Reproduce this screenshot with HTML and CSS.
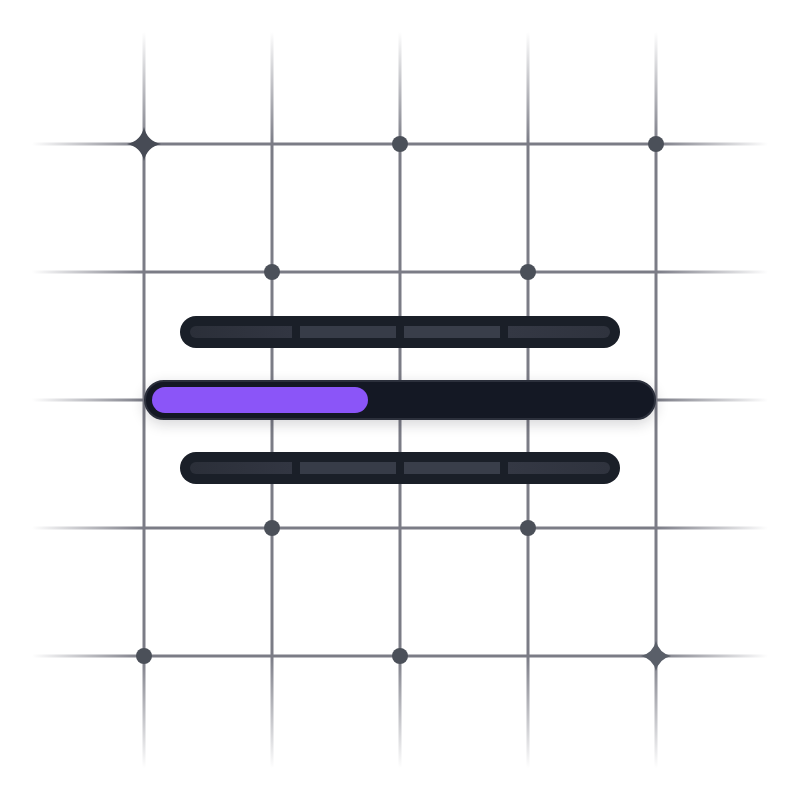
FILE: index.html
```html
<!DOCTYPE html>
<html>
<head>
<meta charset="utf-8">
<link rel="stylesheet" href="styles.css">
</head>
<body>
<div class="stage">
  <svg class="grid" width="800" height="800" viewBox="0 0 800 800">
    <defs>
      <linearGradient id="gh" gradientUnits="userSpaceOnUse" x1="32" y1="0" x2="768" y2="0">
        <stop offset="0" stop-color="#7b7c86" stop-opacity="0"/>
        <stop offset="0.152" stop-color="#7b7c86" stop-opacity="1"/>
        <stop offset="0.848" stop-color="#7b7c86" stop-opacity="1"/>
        <stop offset="1" stop-color="#7b7c86" stop-opacity="0"/>
      </linearGradient>
      <linearGradient id="gv" gradientUnits="userSpaceOnUse" x1="0" y1="32" x2="0" y2="768">
        <stop offset="0" stop-color="#7b7c86" stop-opacity="0"/>
        <stop offset="0.152" stop-color="#7b7c86" stop-opacity="1"/>
        <stop offset="0.848" stop-color="#7b7c86" stop-opacity="1"/>
        <stop offset="1" stop-color="#7b7c86" stop-opacity="0"/>
      </linearGradient>
    </defs>
    <g stroke="url(#gh)" stroke-width="3">
      <line x1="32" y1="144" x2="768" y2="144"/>
      <line x1="32" y1="272" x2="768" y2="272"/>
      <line x1="32" y1="400" x2="768" y2="400"/>
      <line x1="32" y1="528" x2="768" y2="528"/>
      <line x1="32" y1="656" x2="768" y2="656"/>
    </g>
    <g stroke="url(#gv)" stroke-width="3">
      <line x1="144" y1="32" x2="144" y2="768"/>
      <line x1="272" y1="32" x2="272" y2="768"/>
      <line x1="400" y1="32" x2="400" y2="768"/>
      <line x1="528" y1="32" x2="528" y2="768"/>
      <line x1="656" y1="32" x2="656" y2="768"/>
    </g>
    <g fill="#4b5059">
      <circle cx="400" cy="144" r="8"/>
      <circle cx="656" cy="144" r="8"/>
      <circle cx="272" cy="272" r="8"/>
      <circle cx="528" cy="272" r="8"/>
      <circle cx="272" cy="528" r="8"/>
      <circle cx="528" cy="528" r="8"/>
      <circle cx="144" cy="656" r="8"/>
      <circle cx="400" cy="656" r="8"/>
    </g>
    <path fill="#474b55" transform="translate(144 144)" d="M0,-17 Q3,-3 17,0 Q3,3 0,17 Q-3,3 -17,0 Q-3,-3 0,-17 Z"/>
    <path fill="#5a5f69" transform="translate(656 656)" d="M0,-15 Q3,-3 15,0 Q3,3 0,15 Q-3,3 -15,0 Q-3,-3 0,-15 Z"/>
  </svg>
  <div class="bars">
    <div class="seg-bar">
      <div class="seg s1"></div>
      <div class="seg s2"></div>
      <div class="seg s3"></div>
      <div class="seg s4"></div>
    </div>
    <div class="progress">
      <div class="fill"></div>
    </div>
    <div class="seg-bar">
      <div class="seg s1"></div>
      <div class="seg s2"></div>
      <div class="seg s3"></div>
      <div class="seg s4"></div>
    </div>
  </div>
</div>
</body>
</html>
```

FILE: styles.css
```css
html, body {
  margin: 0;
  padding: 0;
  background: #ffffff;
}
.stage {
  position: relative;
  width: 800px;
  height: 800px;
  overflow: hidden;
  background: #ffffff;
}
.grid {
  position: absolute;
  left: 0;
  top: 0;
}
.bars {
  position: relative;
  display: flex;
  flex-direction: column;
  align-items: center;
  gap: 32px;
  padding-top: 316px;
}
.seg-bar {
  box-sizing: border-box;
  width: 440px;
  height: 32px;
  padding: 10px;
  border-radius: 16px;
  background: #1a1f28;
  display: flex;
  gap: 8px;
}
.seg {
  height: 12px;
}
.s1 {
  width: 102px;
  border-radius: 6px 0 0 6px;
  background: linear-gradient(90deg, #2b2f39, #323642);
}
.s2 {
  width: 96px;
  background: #373c48;
}
.s3 {
  width: 96px;
  background: #393e4a;
}
.s4 {
  flex: 1;
  border-radius: 0 6px 6px 0;
  background: linear-gradient(90deg, #343844, #2f333e);
}
.progress {
  box-sizing: border-box;
  width: 512px;
  height: 40px;
  border: 2px solid #2c303c;
  border-radius: 20px;
  background: #141824;
  padding: 5px 6px;
  box-shadow: 0 4px 14px rgba(20, 24, 36, 0.18);
}
.fill {
  width: 216px;
  height: 26px;
  border-radius: 13px;
  background: #8b55f8;
}
```
